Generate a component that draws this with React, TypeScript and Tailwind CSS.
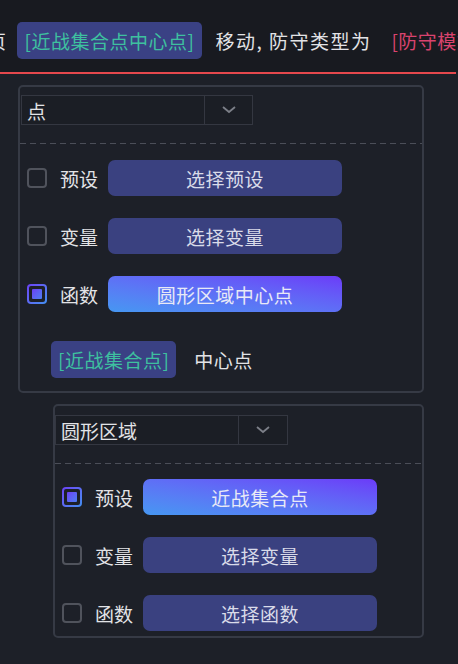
import React from 'react';

const font = { fontFamily: '"Noto Sans CJK SC", "Noto Sans", sans-serif' };

const Check = ({ on }: { on?: boolean }) =>
  on ? (
    <div className="w-[20px] h-[20px] rounded-[4px] p-[2px] bg-linear-to-br from-[#6a3df5] to-[#3f8ff0] shrink-0">
      <div className="w-full h-full rounded-[2px] bg-[#1d2028] p-[3px]">
        <div className="w-full h-full rounded-[1px] bg-linear-to-br from-[#6a3df5] to-[#4a7df2]" />
      </div>
    </div>
  ) : (
    <div className="w-[20px] h-[20px] rounded-[4px] border-2 border-[#50535c] shrink-0" />
  );

const Row = ({ label, text, on }: { label: string; text: string; on?: boolean }) => (
  <div className="flex items-center h-[36px]">
    <div className="ml-[7px]">
      <Check on={on} />
    </div>
    <span className="ml-[13px] w-[38px] text-[19px] text-[#e2e3e6] leading-none">{label}</span>
    <div
      className={
        'ml-[10px] w-[234px] h-[36px] rounded-[7px] flex items-center justify-center text-[19px] tracking-[0.5px] leading-none ' +
        (on
          ? 'bg-linear-to-tr from-[#4597f2] to-[#6b3af8] text-[#e8e9f6]'
          : 'bg-[#3a4180] text-[#d9dbe9]')
      }
    >
      {text}
    </div>
  </div>
);

const Select = ({ value, w }: { value: string; w: number }) => (
  <div className="flex h-[30px] border border-[#343741] bg-[#1b1e25]" style={{ width: w }}>
    <div className="w-[183px] border-r border-[#343741] flex items-center pl-[5px] text-[19px] text-[#e2e3e6] leading-none">
      {value}
    </div>
    <div className="flex-1 flex items-center justify-center">
      <svg width="16" height="10" viewBox="0 0 16 10" fill="none">
        <path d="M2 2l6 5 6-5" stroke="#7c7f88" strokeWidth="1.8" />
      </svg>
    </div>
  </div>
);

const Dash = () => (
  <div className="h-px w-full bg-[repeating-linear-gradient(90deg,#4b4e58_0_6px,transparent_6px_10px)]" />
);

export default function App() {
  return (
    <div className="w-[458px] h-[664px] bg-[#1d2028] overflow-hidden" style={font}>
      <div className="h-[72px] bg-[#181a20] flex items-center pt-[8px] whitespace-nowrap text-[19px] leading-none tracking-[0.5px]">
        <span className="ml-[-13px] text-[#e2e3e6]">页</span>
        <span className="ml-[10px] h-[37px] px-[8px] rounded-[5px] bg-[#3a4184] text-[#3ec09f] flex items-center">
          [近战集合点中心点]
        </span>
        <span className="ml-[13px] text-[#e2e3e6] tracking-[1.5px]">移动, 防守类型为</span>
        <span className="ml-[20px] text-[#d9436e]">[防守模式]</span>
      </div>
      <div className="h-[2px] w-[456px] bg-[#e5484d]" />

      <div className="mt-[11px] ml-[18px] w-[406px] border-2 border-[#363a45] rounded-[5px]">
        <div className="pt-[8px] pl-[1px]">
          <Select value="点" w={232} />
        </div>
        <div className="mt-[18px]">
          <Dash />
        </div>
        <div className="mt-[16px] flex flex-col gap-[22px]">
          <Row label="预设" text="选择预设" />
          <Row label="变量" text="选择变量" />
          <Row label="函数" text="圆形区域中心点" on />
        </div>
        <div className="mt-[29px] mb-[13px] flex items-center">
          <span className="ml-[31px] h-[37px] px-[7px] rounded-[5px] bg-[#3a4184] text-[#3ec09f] text-[19px] tracking-[0.5px] leading-none flex items-center">
            [近战集合点]
          </span>
          <span className="ml-[18px] text-[19px] tracking-[0.5px] text-[#e2e3e6] leading-none">中心点</span>
        </div>
      </div>

      <div className="mt-[11px] ml-[53px] w-[371px] border-2 border-[#363a45] rounded-[5px]">
        <div className="pt-[9px] pl-[0px]">
          <Select value="圆形区域" w={233} />
        </div>
        <div className="mt-[18px]">
          <Dash />
        </div>
        <div className="mt-[15px] mb-[5px] flex flex-col gap-[22px]">
          <Row label="预设" text="近战集合点" on />
          <Row label="变量" text="选择变量" />
          <Row label="函数" text="选择函数" />
        </div>
      </div>
    </div>
  );
}
